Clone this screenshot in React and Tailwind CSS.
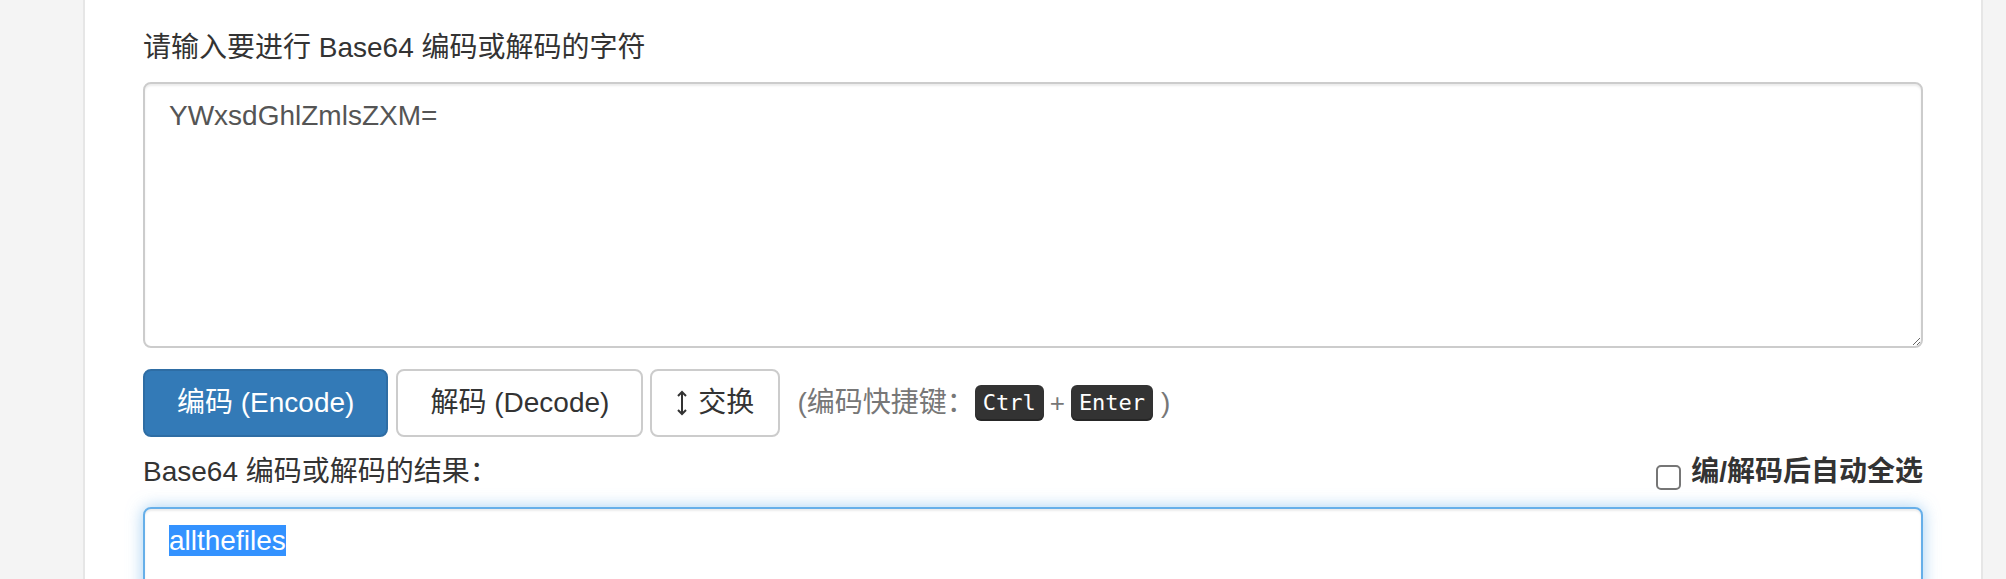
import { useState } from 'react'

export default function App() {
  const [autoSelect, setAutoSelect] = useState(false)

  return (
    <div className="flex h-[579px] overflow-hidden bg-[#f4f4f4] font-['Liberation_Sans','Noto_Sans_CJK_SC',sans-serif]">
      <div className="w-[83px] shrink-0" />

      <main className="w-[1900px] shrink-0 bg-white border-x-2 border-[#e6e6e6] px-[58px] pt-[28px] text-[28px] leading-[40px] text-[#333]">
        <label className="block mb-[14px]">请输入要进行 Base64 编码或解码的字符</label>
        <textarea
          defaultValue="YWxsdGhlZmlsZXM="
          className="block w-full h-[266px] bg-white border-2 border-[#ccc] rounded-[8px] px-[24px] py-[12px] text-[#555] text-[28px] leading-[40px] shadow-[inset_0_2px_2px_rgba(0,0,0,0.075)] outline-none"
        />

        {/* buttons */}
        <div className="flex items-center mt-[21px]">
          <button className="h-[68px] px-[32px] border-2 border-[#2e6da4] bg-[#337ab7] text-white rounded-[8px] whitespace-nowrap">
            编码 (Encode)
          </button>
          <button className="ml-[8px] h-[68px] px-[32px] border-2 border-[#ccc] bg-white text-[#333] rounded-[8px] whitespace-nowrap">
            解码 (Decode)
          </button>
          <button className="ml-[7px] h-[68px] px-[24px] border-2 border-[#ccc] bg-white text-[#333] rounded-[8px] flex items-center gap-[10px] whitespace-nowrap">
            <svg width="12" height="26" viewBox="0 0 12 26" fill="none" stroke="#333" strokeWidth="2">
              <path d="M6 2v22" />
              <path d="M2 6l4-4 4 4" />
              <path d="M2 20l4 4 4-4" />
            </svg>
            交换
          </button>
          <div className="ml-[17px] flex items-center text-[#777] whitespace-nowrap">
            <span>(编码快捷键：</span>
            <kbd className="bg-[#333] text-white rounded-[6px] px-[8px] h-[36px] leading-[36px] text-[22px] font-['DejaVu_Sans_Mono',monospace] shadow-[inset_0_-2px_0_rgba(0,0,0,0.25)]">Ctrl</kbd>
            <span className="mx-[6px] text-[26px]">+</span>
            <kbd className="bg-[#333] text-white rounded-[6px] px-[8px] h-[36px] leading-[36px] text-[22px] font-['DejaVu_Sans_Mono',monospace] shadow-[inset_0_-2px_0_rgba(0,0,0,0.25)]">Enter</kbd>
            <span className="ml-[8px]">)</span>
          </div>
        </div>

        {/* result header */}
        <div className="flex items-center justify-between mt-[15px]">
          <span>Base64 编码或解码的结果：</span>
          <label className="flex items-center font-bold cursor-pointer" onClick={() => setAutoSelect(!autoSelect)}>
            <span className={`mt-[10px] w-[25px] h-[25px] rounded-[5px] border-2 border-[#767676] ${autoSelect ? 'bg-[#0075ff]' : 'bg-white'}`} />
            <span className="ml-[10px]">编/解码后自动全选</span>
          </label>
        </div>

        {/* result box (focused, text selected) */}
        <div className="mt-[15px] h-[220px] bg-white border-2 border-[#66afe9] rounded-[8px] px-[24px] py-[12px] text-[#555] shadow-[inset_0_2px_2px_rgba(0,0,0,0.075),0_0_16px_rgba(102,175,233,0.6)]">
          <span className="bg-[#3392ff] text-white">allthefiles</span>
        </div>
      </main>

      <div className="flex-1" />
    </div>
  )
}
